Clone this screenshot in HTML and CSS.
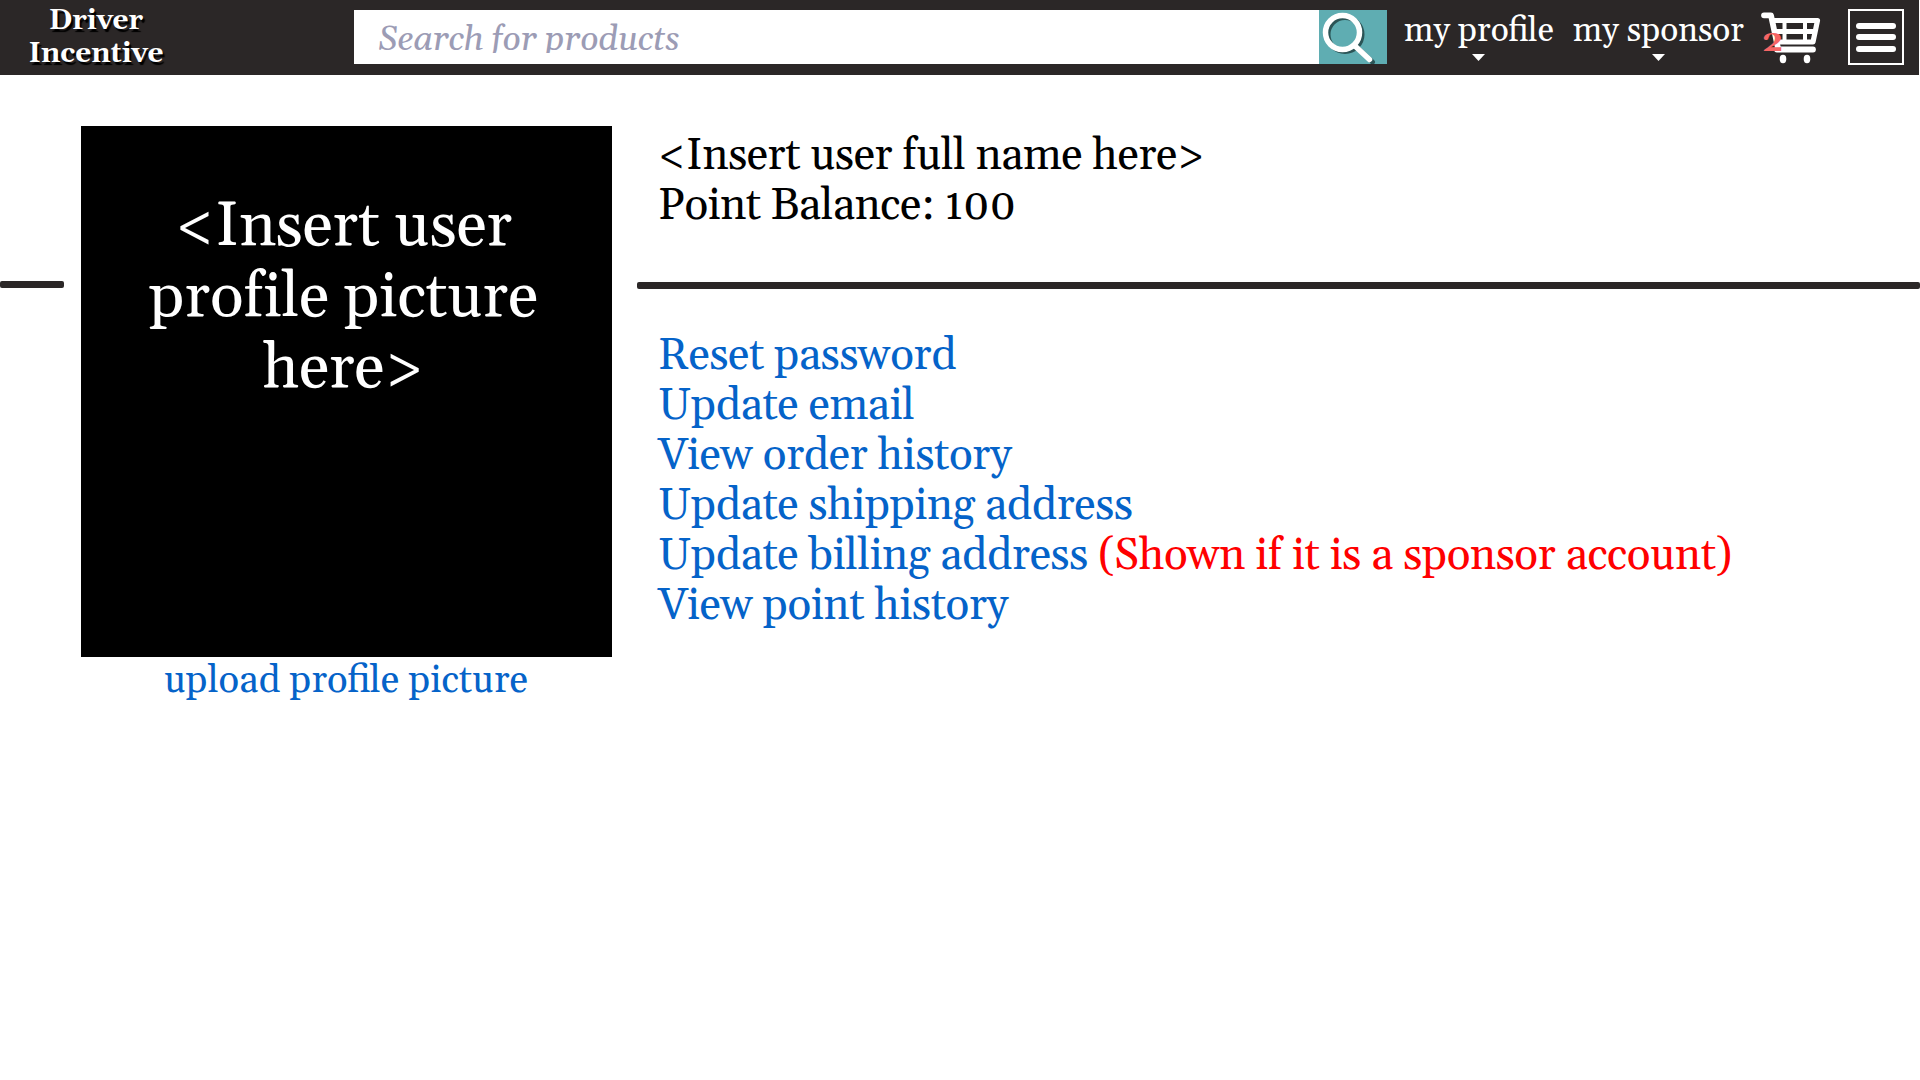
FILE: index.html
```html
<!DOCTYPE html>
<html lang="en">
<head>
<meta charset="utf-8">
<title>Driver Incentive</title>
<link rel="stylesheet" href="styles.css">
</head>
<body>
<header class="header">
  <div class="logo">Driver<br>Incentive</div>
  <div class="search">
    <div class="search-field"><span class="placeholder">Search for products</span></div>
    <div class="search-button">
      <svg width="68" height="54" viewBox="0 0 68 54" fill="none">
        <g stroke="#2b5456" stroke-width="5" transform="translate(2.5 2)"><circle cx="23.5" cy="22.5" r="17"/><path d="M36 36 51 50" stroke-linecap="round"/></g>
        <g stroke="#fff" stroke-width="5.5"><circle cx="23.5" cy="22.5" r="17"/><path d="M36 36 50.500 49.500" stroke-linecap="round"/></g>
      </svg>
    </div>
  </div>
  <nav class="nav">
    <a class="nav-item">my profile<svg class="caret" width="13" height="7" viewBox="0 0 13 7"><path d="M0 0h13L6.500 7z" fill="#fff"/></svg></a>
    <a class="nav-item">my sponsor<svg class="caret" width="13" height="7" viewBox="0 0 13 7"><path d="M0 0h13L6.500 7z" fill="#fff"/></svg></a>
  </nav>
  <div class="cart">
    <svg width="60" height="52" viewBox="0 0 60 52" fill="none" stroke="#fff">
      <path d="M3 3.300H10L17 36" stroke-width="5.800" stroke-linecap="round" stroke-linejoin="round"/>
      <path d="M10 8.500H56.500L52 30H15M13 19.500H54" stroke-width="5.200" stroke-linejoin="round"/>
      <path d="M23.500 9V30M44 9V30" stroke-width="4"/>
      <path d="M16 37.500H52" stroke-width="5.800" stroke-linecap="round"/>
      <g fill="#fff" stroke="none"><ellipse cx="22" cy="47" rx="3.300" ry="4.200"/><ellipse cx="46" cy="47" rx="3.300" ry="4.200"/></g>
    </svg>
    <span class="cart-count">2</span>
  </div>
  <div class="menu"><i class="bar"></i><i class="bar"></i><i class="bar last"></i></div>
</header>
<main class="main">
  <div class="rule rule-left"></div>
  <section class="profile">
    <div class="picture">&lt;Insert user<br>profile picture<br>here&gt;</div>
    <a class="upload">upload profile picture</a>
  </section>
  <section class="details">
    <div class="summary">&lt;Insert user full name here&gt;<br>Point Balance: 100</div>
    <div class="rule"></div>
    <ul class="links">
      <li>Reset password</li>
      <li>Update email</li>
      <li>View order history</li>
      <li>Update shipping address</li>
      <li>Update billing address <span class="note">(Shown if it is a sponsor account)</span></li>
      <li>View point history</li>
    </ul>
  </section>
</main>
</body>
</html>
```
FILE: styles.css
```css
* { box-sizing: border-box; }
body { margin: 0; background: #fff; font-family: Georgia, Gelasio, "Liberation Serif", serif; overflow: hidden; }
.header { width: 1919px; height: 75px; background: #2b2727; display: flex; align-items: flex-start; color: #fff; }
.logo { width: 192px; margin-right: 162px; padding-top: 5px; text-align: center; font-weight: bold; font-size: 28px; line-height: 33px; text-shadow: 2px 3px 1px #000; }
.search { display: flex; width: 1033px; height: 54px; margin-top: 10px; }
.search-field { width: 965px; background: #fff; padding: 10px 0 0 24px; }
.placeholder { display: block; height: 33px; overflow: hidden; color: #9c9cb5; font-style: italic; font-size: 35px; letter-spacing: -0.440px; line-height: 40px; white-space: nowrap; }
.search-button { width: 68px; background: #5fadb2; }
.search-button svg { display: block; }
.nav { display: flex; margin-left: 17px; width: 357px; gap: 19px; }
.nav-item { display: flex; flex-direction: column; align-items: center; height: 61px; padding-top: 13px; font-size: 33.400px; line-height: 37px; white-space: nowrap; }
.caret { margin-top: 4px; }
.cart { position: relative; width: 60px; height: 52px; margin-top: 12px; }
.cart svg { display: block; }
.cart-count { position: absolute; left: 1px; top: 14px; font-size: 30px; line-height: 32px; font-weight: bold; color: #f66464; transform: scaleX(1.12); transform-origin: left; }
.menu { width: 56px; height: 56px; margin: 9px 0 0 27px; border: 2px solid #fff; padding: 12px 6px 0; display: flex; flex-direction: column; gap: 5px; }
.bar { height: 6px; border-radius: 3px; background: #fff; }
.last { margin-top: 1px; }
.main { display: flex; align-items: flex-start; }
.rule { height: 7px; border-radius: 2px; background: #2b2727; }
.rule-left { width: 64px; margin: 206px 17px 0 0; }
.profile { width: 531px; margin-top: 51px; text-align: center; }
.picture { height: 531px; background: #000; color: #fff; padding: 65px 6px 0 0; font-size: 62.500px; letter-spacing: -0.250px; line-height: 71px; }
.upload { display: block; font-size: 38.200px; line-height: 42px; color: #0563c9; padding: 3px 1px 0 0; }
.details { width: 1283px; margin-left: 25px; padding-top: 56px; }
.summary { height: 151px; padding-left: 21px; font-size: 44px; letter-spacing: -0.420px; line-height: 50px; }
.links { list-style: none; margin: 0; padding: 42px 0 0 21px; font-size: 44px; letter-spacing: -0.350px; line-height: 50px; color: #0563c9; white-space: nowrap; }
.note { color: #f00; }
```
